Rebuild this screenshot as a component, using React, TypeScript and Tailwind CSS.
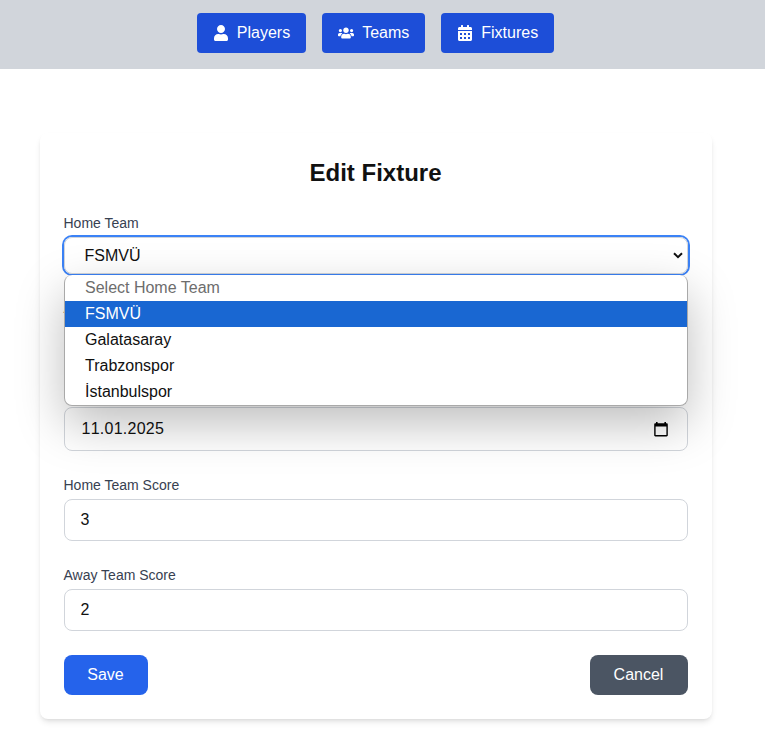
import { FaCalendarAlt, FaUser, FaUsers } from "react-icons/fa";
import type { ReactNode } from "react";

const nav = [
  { label: "Players", icon: FaUser },
  { label: "Teams", icon: FaUsers },
  { label: "Fixtures", icon: FaCalendarAlt },
];

const options = ["Select Home Team", "FSMVÜ", "Galatasaray", "Trabzonspor", "İstanbulspor"];

function optionClass(index: number) {
  if (index === 0) return "text-[#6d6d6d]";
  if (index === 1) return "bg-[#1967d2] text-white";
  return "text-[#101010]";
}

function Field({ label, children }: { label: string; children: ReactNode }) {
  return (
    <div>
      <div className="mb-1 text-sm leading-5 text-[#374151]">{label}</div>
      {children}
    </div>
  );
}

function Chevron() {
  return (
    <svg width="10" height="7" viewBox="0 0 10 7" fill="none" stroke="#101010" strokeWidth="2">
      <path d="M1 1.2 5 5.2 9 1.2" />
    </svg>
  );
}

function DateIcon() {
  return (
    <svg width="14" height="15" viewBox="0 0 14 15">
      <path
        fill="#000"
        fillRule="evenodd"
        d="M2 0h1.6v1.3h6.8V0H12v1.3h.6c.7 0 1.2.5 1.2 1.2v10.8c0 .7-.5 1.2-1.2 1.2H1.4c-.7 0-1.2-.5-1.2-1.2V2.5c0-.7.5-1.2 1.2-1.2H2zM1.600 4.500v8.600h10.800V4.500z"
      />
    </svg>
  );
}

export default function App() {
  return (
    <div className="h-[746px] overflow-hidden bg-white font-['Liberation_Sans',Arial,sans-serif] text-base text-[#111]">
      <nav className="flex h-[69px] justify-center gap-4 bg-[#d1d5db] pt-[13px] pr-[14px]">
        {nav.map(({ label, icon: Icon }) => (
          <button key={label} className="flex h-10 items-center rounded bg-[#1d4ed8] px-4 text-white">
            <Icon className="mr-2" />
            {label}
          </button>
        ))}
      </nav>

      <main className="mt-16 ml-[39.5px] h-[586px] w-[672px] rounded-lg bg-white p-6 shadow-[0_4px_6px_-1px_rgba(0,0,0,0.1),0_2px_4px_-2px_rgba(0,0,0,0.1)]">
        <h1 className="mb-6 text-center text-2xl font-bold">Edit Fixture</h1>
        <div className="flex flex-col gap-6">
          <Field label="Home Team">
            <div className="relative">
              <div className="flex h-[37px] items-center justify-between rounded-lg border border-[#d1d5db] pr-[3.5px] pl-5 ring-2 ring-[#3b82f6]">
                FSMVÜ
                <Chevron />
              </div>
              <div className="absolute top-[38px] left-[0.5px] z-10 w-full overflow-hidden rounded-lg border border-t-0 border-[#a9a9a9] bg-white shadow-[0_18px_48px_rgba(0,0,0,0.26)]">
                {options.map((name, i) => (
                  <div key={name} className={`h-[26px] pl-5 leading-[26px] ${optionClass(i)}`}>
                    {name}
                  </div>
                ))}
              </div>
            </div>
          </Field>
          <Field label="Away Team">
            <div className="h-[37px] rounded-lg border border-[#d1d5db]" />
          </Field>
          <Field label="Date">
            <div className="flex h-11 items-center justify-between rounded-lg border border-[#d1d5db] pr-[18.5px] pl-[17px]">
              <span className="tracking-[0.25px] [font-kerning:none]">11.01.2025</span>
              <DateIcon />
            </div>
          </Field>
          <Field label="Home Team Score">
            <div className="flex h-[42px] items-center rounded-lg border border-[#d1d5db] px-4">3</div>
          </Field>
          <Field label="Away Team Score">
            <div className="flex h-[42px] items-center rounded-lg border border-[#d1d5db] px-4">2</div>
          </Field>
          <div className="flex justify-between text-white">
            <button className="h-10 w-[84px] rounded-lg bg-[#2563eb]">Save</button>
            <button className="h-10 w-[98px] rounded-lg bg-[#4b5563]">Cancel</button>
          </div>
        </div>
      </main>
    </div>
  );
}
